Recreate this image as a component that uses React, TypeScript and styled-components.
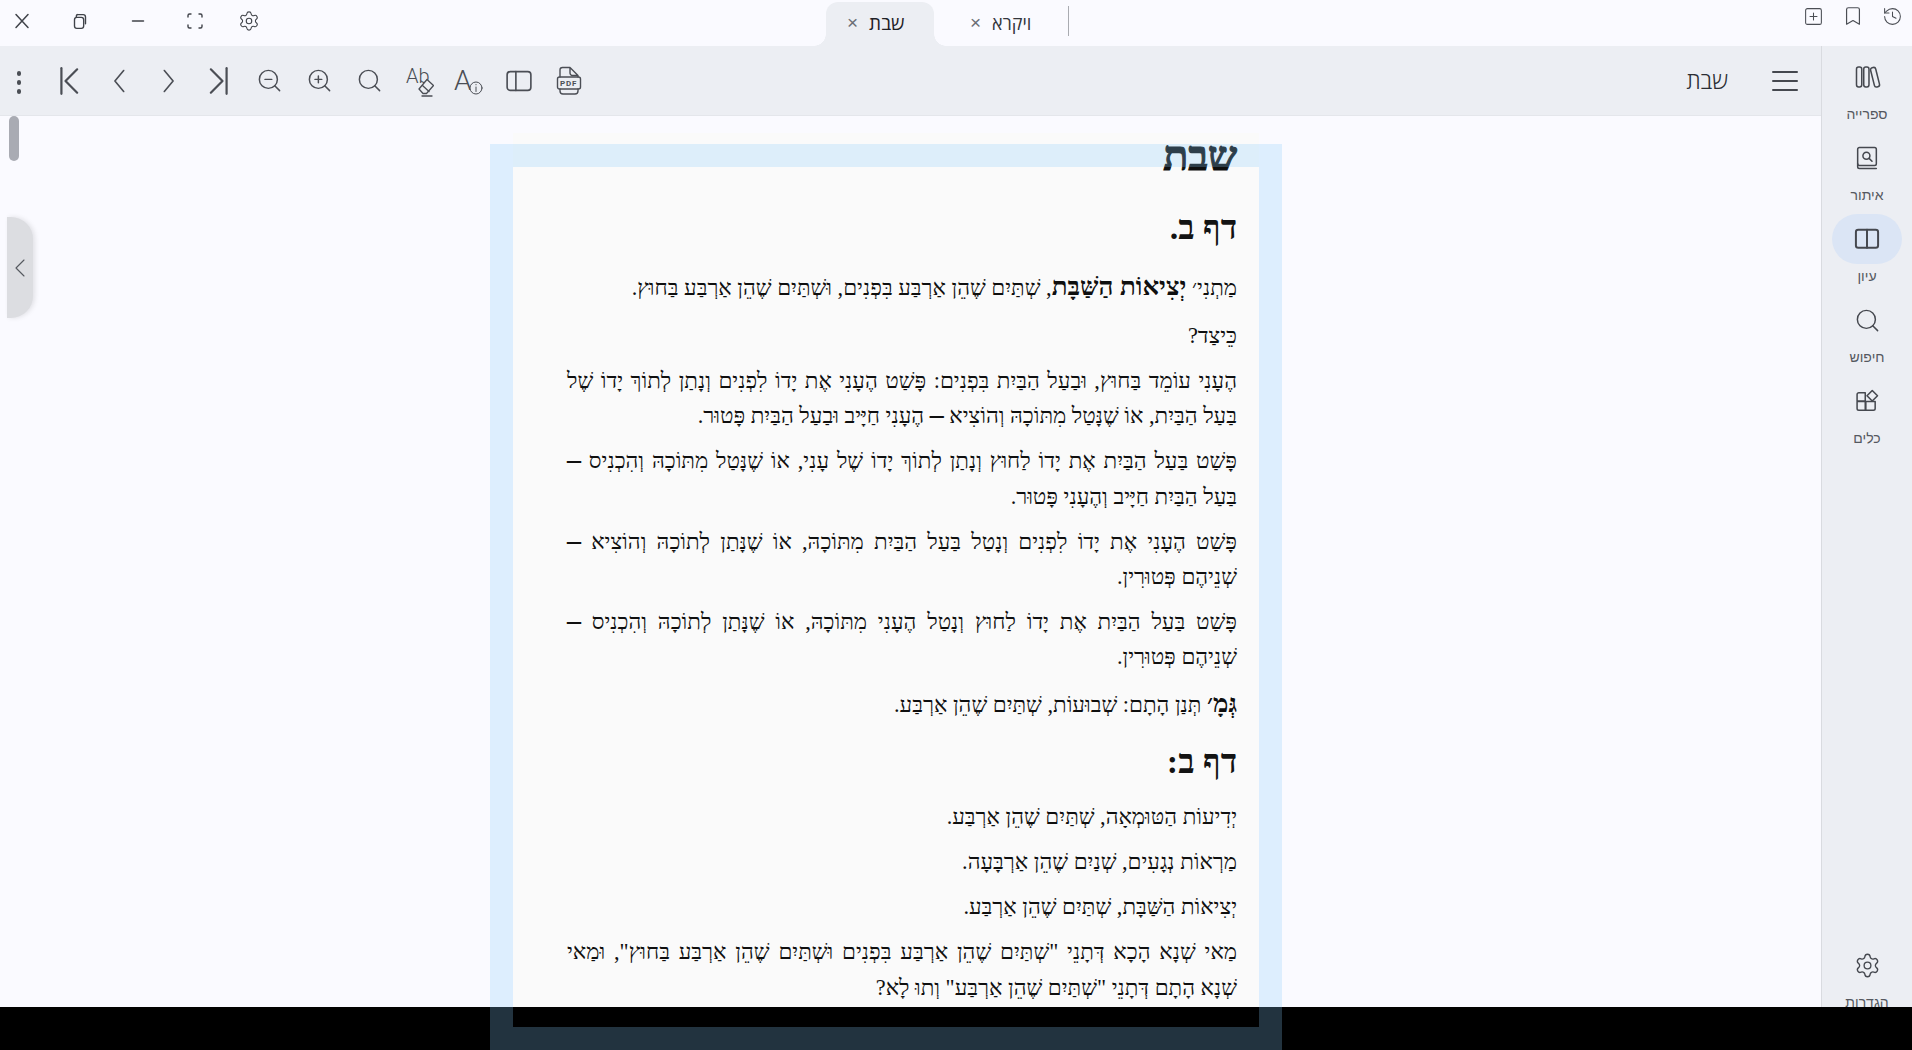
import React from "react";
import styled, { createGlobalStyle } from "styled-components";
import { Settings, History, Bookmark, SquarePlus, Search, ZoomIn, ZoomOut } from "lucide-react";

const Global = createGlobalStyle`
  html, body { margin: 0; padding: 0; background: #000; overflow: hidden; }
  * { box-sizing: border-box; }
`;

const Root = styled.div`
  position: relative; width: 1912px; height: 1050px; background: #000; overflow: hidden;
  font-family: "Open Sans", "Liberation Sans", sans-serif; color: #45484f;
`;
const Shell = styled.div`display: flex; flex-direction: column; height: 1007px; background: #fafaff; overflow: hidden;`;
const TopBar = styled.header`
  display: flex; direction: ltr; align-items: flex-start; height: 46px; flex: none; position: relative;
`;
const WindowControls = styled.div`display: flex; width: 826px; padding-left: 0; padding-top: 1px;`;
const WinButton = styled.button<{ $w: number }>`
  all: unset; display: flex; align-items: center; justify-content: center; width: ${p => p.$w}px; height: 40px; color: #40434a;
`;
const Tabs = styled.div`display: flex; height: 46px; flex: none;`;
const Tab = styled.div<{ $active?: boolean }>`
  position: relative; display: flex; align-items: center; height: 44px; margin-top: 2px; gap: 11px;
  padding: 0 0 3px ${p => (p.$active ? 21 : 36)}px;
  width: ${p => (p.$active ? 108 : 134)}px;
  font-size: ${p => (p.$active ? 19 : 18)}px; color: ${p => (p.$active ? "#1f2126" : "#33363c")};
  background: ${p => (p.$active ? "#eceef3" : "transparent")};
  border-radius: ${p => (p.$active ? "12px 12px 0 0" : "0")};
  ${p => p.$active && `
    &::before, &::after { content: ""; position: absolute; bottom: 0; width: 12px; height: 12px; }
    &::before { left: -12px; background: radial-gradient(circle at 0 0, transparent 11.5px, #eceef3 12px); }
    &::after { right: -12px; background: radial-gradient(circle at 100% 0, transparent 11.5px, #eceef3 12px); }
  `}
`;
const TabClose = styled.span`font-size: 19px; color: #6b6e75; line-height: 1; font-family: "Liberation Sans", sans-serif;`;
const TabTitle = styled.span`direction: rtl;`;
const TabDivider = styled.div`width: 1px; height: 30px; margin-top: 6px; background: #a9abb1;`;
const TopRight = styled.div`display: flex; margin-left: auto; width: 118px; padding-top: 0;`;
const TopRightButton = styled.button`
  all: unset; display: flex; align-items: center; justify-content: center; width: 40px; height: 32px; color: #4b4e55;
`;
const Body = styled.div`display: flex; flex: 1; min-height: 0; overflow: hidden;`;
const Column = styled.div`display: flex; flex-direction: column; flex: 1; min-width: 0;`;
const Toolbar = styled.div`
  display: flex; align-items: center; height: 70px; flex: none; background: #eceef3; border-bottom: 1px solid #e4e6eb; padding-left: 44px; position: relative;
`;
const Dots = styled.span`
  position: absolute; left: 16.5px; top: 25px; display: flex; flex-direction: column; gap: 4.5px;
  & > i { display: block; width: 4.5px; height: 4.5px; border-radius: 50%; background: #4b4e55; }
`;
const ToolButton = styled.button`
  all: unset; display: flex; align-items: center; justify-content: center; width: 50px; height: 50px; color: #4b4e55;
`;
const DocTitle = styled.div`margin-left: auto; font-size: 23px; font-weight: 300; color: #2b2e34; direction: rtl; padding-bottom: 2px;`;
const Hamburger = styled.div`
  margin: 0 23px 0 44px; width: 26px; height: 20px; display: flex; flex-direction: column; justify-content: space-between;
  & > i { display: block; height: 2px; background: #45484f; border-radius: 1px; }
`;
const Viewer = styled.main`
  position: relative; flex: 1; min-height: 0; overflow: hidden; background: #fafaff; padding: 28px 0 0 513px;
`;
const ScrollThumb = styled.div`
  position: absolute; left: 9px; top: 0; width: 10px; height: 45px; border-radius: 5px; background: #a9abb3;
`;
const Handle = styled.div`
  position: absolute; left: 7px; top: 101px; width: 26px; height: 101px; display: flex; align-items: center; padding-left: 2px;
  background: #dcdde1; border-radius: 0 22px 22px 0; box-shadow: 2px 0 5px rgba(0,0,0,.1); color: #55585f;
`;
const Sheet = styled.article`
  width: 746px; height: 900px; background: #fafafa; direction: rtl; padding: 0 22px 0 54px;
  font-family: "Liberation Serif", "Times New Roman", serif; color: #0f0f0f;
`;
const BookTitle = styled.h1`margin: -11px 0 0; font-size: 41px; line-height: 46px; font-weight: 700; color: #0f0f0f; -webkit-text-stroke: 1.2px #0f0f0f;`;
const DafTitle = styled.h2<{ $gap: number }>`margin: ${p => p.$gap}px 0 0; font-size: 34px; line-height: 44px; font-weight: 700; color: #131313;`;
const Para = styled.p<{ $gap?: number }>`
  margin: ${p => p.$gap ?? 9.5}px 0 0; font-size: 22.3px; line-height: 35.4px; text-align: justify;
`;
const Lead = styled.b`font-size: 26px; line-height: 38px;`;
const Dash = styled.span`font-size: 28px; line-height: 0; font-weight: 700;`;
const Frame = styled.div`
  position: absolute; left: 490px; top: 144px; width: 792px; height: 906px;
  border: solid rgba(135,205,250,.25); border-width: 23px; pointer-events: none;
`;
const Rail = styled.nav`
  width: 91px; flex: none; background: #eceef3; border-left: 1px solid #d9dbe0; border-top: 1px solid #d9dbe0; margin-top: -1px;
  display: flex; flex-direction: column; align-items: center; padding-top: 6px; position: relative; margin-bottom: -14px;
`;
const RailItem = styled.div`
  display: flex; flex-direction: column; align-items: center; width: 70px; height: 81px; flex: none; color: #45484f;
`;
const RailIcon = styled.div<{ $active?: boolean }>`
  display: flex; align-items: center; justify-content: center; width: 70px; height: 50px; border-radius: 25px;
  background: ${p => (p.$active ? "#dbe5f5" : "transparent")};
`;
const RailLabel = styled.span`font-size: 14px; line-height: 20px; margin-top: 2px; direction: rtl; color: #55585f; font-family: "Liberation Sans", sans-serif;`;
const RailSpacer = styled.div`flex: 1;`;
const Glyph = styled.svg`display: block; fill: none; stroke: currentColor; stroke-linecap: round; stroke-linejoin: round;`;
const IconText = styled.text`font-family: "Roboto", "Liberation Sans", sans-serif; fill: currentColor; stroke: none;`;

const Ico = ({ s = 24, w = 1.5, children }: { s?: number; w?: number; children: React.ReactNode }) => (
  <Glyph width={s} height={s} viewBox="0 0 24 24" strokeWidth={w}>{children}</Glyph>
);

const CloseI = () => <Ico s={24} w={1.5}><path d="M6 5.500 18 18.500M18 5.500 6 18.500" /></Ico>;
const CopyI = () => <Ico s={22} w={1.5}><rect x="6" y="8" width="10" height="12" rx="2.500" /><path d="M9 5h6.500A2.500 2.500 0 0 1 18 7.500V15" /><path d="M8 8V7a2 2 0 0 1 1-2" /></Ico>;
const MinusI = () => <Ico s={24}><path d="M6.500 12h11" /></Ico>;
const FullI = () => <Ico s={24} w={1.4}><path d="M8 5H6.500A1.500 1.500 0 0 0 5 6.500V8M16 5h1.500A1.500 1.500 0 0 1 19 6.500V8M5 16v1.500A1.500 1.500 0 0 0 6.500 19H8M19 16v1.500a1.500 1.500 0 0 1-1.500 1.500H16" /></Ico>;
const FirstI = () => <Ico s={28} w={1.9}><path d="M5.500 1v22" /><path d="M19 2 9 12l10 10" /></Ico>;
const PrevI = () => <Ico s={28} w={1.4}><path d="M16 3 8.500 12 16 21" /></Ico>;
const NextI = () => <Ico s={28} w={1.4}><path d="M8 3l7.500 9L8 21" /></Ico>;
const LastI = () => <Ico s={28} w={1.9}><path d="M18.500 1v22" /><path d="M5 2l10 10L5 22" /></Ico>;
const Ab = () => (
  <Glyph width={30} height={32} viewBox="-2 0 30 32" strokeWidth={1.3}>
    <IconText x="0" y="18" fontSize="20" fontWeight="300">Ab</IconText>
    <path d="M13 24 21 14.500l6.500 6L20.500 28.500h-3.500Z" fill="#eceef3" />
    <path d="M16.500 20.500l6.500 6" />
    <path d="M16 31h10" />
  </Glyph>
);
const FontInfo = () => (
  <Glyph width={30} height={32} viewBox="0 0 30 32" strokeWidth={1}>
    <IconText x="0" y="25" fontSize="28" fontWeight="300">A</IconText>
    <circle cx="22" cy="23" r="6" fill="#eceef3" />
    <path d="M22 22v4.500M22 19.500v.3" />
  </Glyph>
);
const SidebarI = () => <Ico s={30} w={1.3}><rect x="2.500" y="4.500" width="19" height="15" rx="2.500" /><path d="M9.500 4.500v15" /></Ico>;
const PdfI = () => (
  <Glyph width={26} height={32} viewBox="0 0 26 32" strokeWidth={1.4}>
    <path d="M4 12V5a2.500 2.500 0 0 1 2.500-2.500H14L22 10.500V12M14 2.500V8a2.500 2.500 0 0 0 2.500 2.500H22" />
    <rect x="1.500" y="12" width="23" height="12" rx="2" />
    <path d="M4 24v2a3 3 0 0 0 3 3h12a3 3 0 0 0 3-3v-2" />
    <IconText x="4" y="21" fontSize="8" fontWeight="700" letterSpacing=".8">PDF</IconText>
  </Glyph>
);
const LibI = () => <Ico s={28} w={1.3}><rect x="3" y="3.500" width="4.500" height="17" rx="1.800" /><rect x="9.200" y="3.500" width="4.500" height="17" rx="1.800" /><rect x="16.600" y="3.700" width="4.500" height="17" rx="1.800" transform="rotate(-14 18.800 12)" /></Ico>;
const BookSearchI = () => <Ico s={28} w={1.3}><rect x="4" y="3" width="16" height="15.500" rx="1.500" /><path d="M4 17v2.500A1.500 1.500 0 0 0 5.500 21H20" /><circle cx="11.500" cy="10" r="3" /><path d="m13.800 12.300 2.500 2.500" /></Ico>;
const BookI = () => <Ico s={28} w={1.7}><rect x="2.500" y="4" width="19" height="15.500" rx="2" /><path d="M12 4v15.500" /></Ico>;
const AppsI = () => <Ico s={28} w={1.3}><path d="M3.500 6.500a1.500 1.500 0 0 1 1.500-1.500h5.500v7h-7ZM3.500 12.500h7v7.500H5a1.500 1.500 0 0 1-1.500-1.500ZM11 12.500h8v6a1.500 1.500 0 0 1-1.500 1.500H11Z" /><path d="m16.500 3 4.500 4.500-4.500 4.500L12 7.500Z" /></Ico>;

const rail = [
  { label: "ספרייה", icon: <LibI /> },
  { label: "איתור", icon: <BookSearchI /> },
  { label: "עיון", icon: <BookI />, active: true },
  { label: "חיפוש", icon: <Search size={27} strokeWidth={1.3} /> },
  { label: "כלים", icon: <AppsI /> },
];

export default function App() {
  return (
    <Root>
      <Global />
      <Shell>
        <TopBar>
          <WindowControls>
            <WinButton $w={44}><CloseI /></WinButton>
            <WinButton $w={72}><CopyI /></WinButton>
            <WinButton $w={44}><MinusI /></WinButton>
            <WinButton $w={70}><FullI /></WinButton>
            <WinButton $w={38}><Settings size={22} strokeWidth={1.2} /></WinButton>
          </WindowControls>
          <Tabs>
            <Tab $active><TabClose>×</TabClose><TabTitle>שבת</TabTitle></Tab>
            <Tab><TabClose>×</TabClose><TabTitle>ויקרא</TabTitle></Tab>
            <TabDivider />
          </Tabs>
          <TopRight>
            <TopRightButton><SquarePlus size={21} strokeWidth={1.2} /></TopRightButton>
            <TopRightButton><Bookmark size={22} strokeWidth={1.3} /></TopRightButton>
            <TopRightButton><History size={21} strokeWidth={1.2} /></TopRightButton>
          </TopRight>
        </TopBar>
        <Body>
          <Column>
            <Toolbar>
              <Dots><i /><i /><i /></Dots>
              <ToolButton><FirstI /></ToolButton>
              <ToolButton><PrevI /></ToolButton>
              <ToolButton><NextI /></ToolButton>
              <ToolButton><LastI /></ToolButton>
              <ToolButton><ZoomOut size={27} strokeWidth={1.3} /></ToolButton>
              <ToolButton><ZoomIn size={27} strokeWidth={1.3} /></ToolButton>
              <ToolButton><Search size={27} strokeWidth={1.3} /></ToolButton>
              <ToolButton><Ab /></ToolButton>
              <ToolButton><FontInfo /></ToolButton>
              <ToolButton><SidebarI /></ToolButton>
              <ToolButton><PdfI /></ToolButton>
              <DocTitle>שבת</DocTitle>
              <Hamburger><i /><i /><i /></Hamburger>
            </Toolbar>
            <Viewer>
              <ScrollThumb />
              <Handle><Ico s={24} w={1.1}><path d="M15 4 7 12l8 8" /></Ico></Handle>
              <Sheet>
                <BookTitle>שבת</BookTitle>
                <DafTitle $gap={27}>דף ב.</DafTitle>
                <Para $gap={18}>מַתְנִי׳ <Lead>יְצִיאוֹת הַשַּׁבָּת</Lead>, שְׁתַּיִם שֶׁהֵן אַרְבַּע בִּפְנִים, וּשְׁתַּיִם שֶׁהֵן אַרְבַּע בַּחוּץ.</Para>
                <Para $gap={12}>כֵּיצַד?</Para>
                <Para>הֶעָנִי עוֹמֵד בַּחוּץ, וּבַעַל הַבַּיִת בִּפְנִים: פָּשַׁט הֶעָנִי אֶת יָדוֹ לִפְנִים וְנָתַן לְתוֹךְ יָדוֹ שֶׁל בַּעַל הַבַּיִת, אוֹ שֶׁנָּטַל מִתּוֹכָהּ וְהוֹצִיא <Dash>–</Dash> הֶעָנִי חַיָּיב וּבַעַל הַבַּיִת פָּטוּר.</Para>
                <Para>פָּשַׁט בַּעַל הַבַּיִת אֶת יָדוֹ לַחוּץ וְנָתַן לְתוֹךְ יָדוֹ שֶׁל עָנִי, אוֹ שֶׁנָּטַל מִתּוֹכָהּ וְהִכְנִיס <Dash>–</Dash> בַּעַל{"\u00A0"}הַבַּיִת חַיָּיב וְהֶעָנִי פָּטוּר.</Para>
                <Para>פָּשַׁט הֶעָנִי אֶת יָדוֹ לִפְנִים וְנָטַל בַּעַל הַבַּיִת מִתּוֹכָהּ, אוֹ שֶׁנָּתַן לְתוֹכָהּ וְהוֹצִיא <Dash>–</Dash> שְׁנֵיהֶם{"\u00A0"}פְּטוּרִין.</Para>
                <Para>פָּשַׁט בַּעַל הַבַּיִת אֶת יָדוֹ לַחוּץ וְנָטַל הֶעָנִי מִתּוֹכָהּ, אוֹ שֶׁנָּתַן לְתוֹכָהּ וְהִכְנִיס <Dash>–</Dash> שְׁנֵיהֶם{"\u00A0"}פְּטוּרִין.</Para>
                <Para $gap={10}><Lead>גְּמָ׳</Lead> תְּנַן הָתָם: שְׁבוּעוֹת, שְׁתַּיִם שֶׁהֵן אַרְבַּע.</Para>
                <DafTitle $gap={17}>דף ב:</DafTitle>
                <Para $gap={15.5}>יְדִיעוֹת הַטּוּמְאָה, שְׁתַּיִם שֶׁהֵן אַרְבַּע.</Para>
                <Para>מַרְאוֹת נְגָעִים, שְׁנַיִם שֶׁהֵן אַרְבָּעָה.</Para>
                <Para>יְצִיאוֹת הַשַּׁבָּת, שְׁתַּיִם שֶׁהֵן אַרְבַּע.</Para>
                <Para $gap={10}>מַאי שְׁנָא הָכָא דְּתָנֵי "שְׁתַּיִם שֶׁהֵן אַרְבַּע בִּפְנִים וּשְׁתַּיִם שֶׁהֵן אַרְבַּע בַּחוּץ", וּמַאי שְׁנָא{"\u00A0"}הָתָם דְּתָנֵי "שְׁתַּיִם שֶׁהֵן אַרְבַּע" וְתוּ לָא?</Para>
              </Sheet>
            </Viewer>
          </Column>
          <Rail>
            {rail.map(r => (
              <RailItem key={r.label}>
                <RailIcon $active={r.active}>{r.icon}</RailIcon>
                <RailLabel>{r.label}</RailLabel>
              </RailItem>
            ))}
            <RailSpacer />
            <RailItem>
              <RailIcon><Settings size={27} strokeWidth={1.2} /></RailIcon>
              <RailLabel>הגדרות</RailLabel>
            </RailItem>
          </Rail>
        </Body>
      </Shell>
      <Frame />
    </Root>
  );
}
